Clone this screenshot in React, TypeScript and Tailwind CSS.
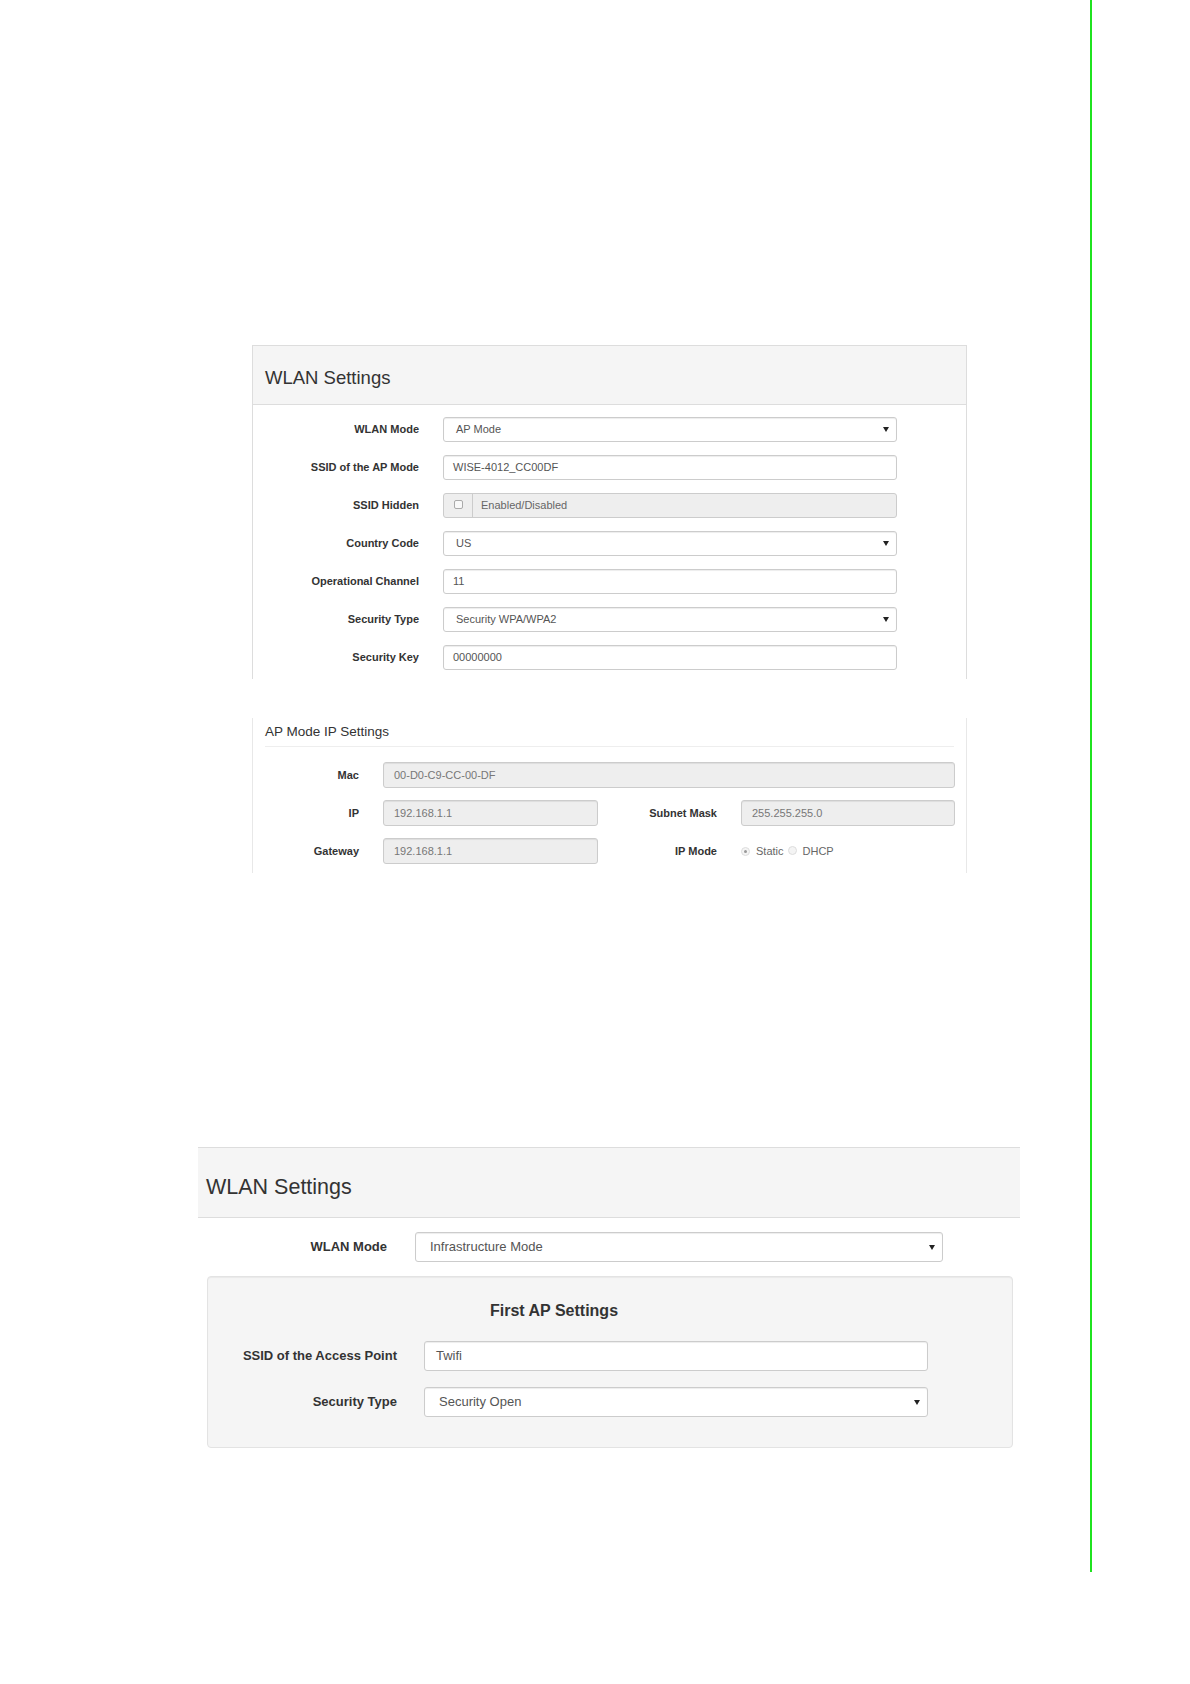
import React from "react";

const font = { fontFamily: '"Liberation Sans", Arial, sans-serif' };

function Arrow() {
  return (
    <svg width="6" height="5" viewBox="0 0 6 5" className="shrink-0">
      <path d="M0 0 L6 0 L3 5 Z" fill="#222" />
    </svg>
  );
}

function Field({
  value,
  select,
  disabled,
  className,
  text = "text-[11px]",
  pad = "pl-[10px]",
}: {
  value: string;
  select?: boolean;
  disabled?: boolean;
  className: string;
  text?: string;
  pad?: string;
}) {
  return (
    <div
      className={`flex items-center justify-between border border-[#ccc] rounded-[3px] pr-[7px] shadow-[inset_0_1px_1px_rgba(0,0,0,0.075)] ${pad} ${text} ${
        disabled ? "bg-[#eee] text-[#777]" : "bg-white text-[#555]"
      } ${className}`}
    >
      <span className="whitespace-nowrap">{value}</span>
      {select && <Arrow />}
    </div>
  );
}

function Radio({ checked }: { checked?: boolean }) {
  return (
    <span className="inline-flex items-center justify-center w-[9px] h-[9px] rounded-full border border-[#ddd] bg-[#f4f4f4]">
      {checked && <span className="w-[3px] h-[3px] rounded-full bg-[#999]" />}
    </span>
  );
}

export default function App() {
  const apRows = [
    { label: "WLAN Mode", value: "AP Mode", select: true },
    { label: "SSID of the AP Mode", value: "WISE-4012_CC00DF" },
    { label: "SSID Hidden", value: "Enabled/Disabled", hidden: true },
    { label: "Country Code", value: "US", select: true },
    { label: "Operational Channel", value: "11" },
    { label: "Security Type", value: "Security WPA/WPA2", select: true },
    { label: "Security Key", value: "00000000" },
  ];

  return (
    <div className="w-[1190px] h-[1684px] bg-white flex" style={font}>
      <div className="w-[1090px] flex flex-col">
        {/* WLAN Settings - AP mode */}
        <div className="mt-[345px] ml-[252px] w-[715px]">
          <div className="h-[60px] bg-[#f5f5f5] border border-[#ddd] flex items-center pl-[12px] pt-[6px]">
            <span className="text-[18.5px] text-[#333]">WLAN Settings</span>
          </div>
          <div className="h-[274px] border-x border-[#ddd] pt-[12px] flex flex-col gap-[13px]">
            {apRows.map((r) => (
              <div key={r.label} className="flex items-center h-[25px]">
                <div className="w-[166px] text-right text-[11px] font-bold text-[#333]">{r.label}</div>
                {r.hidden ? (
                  <div className="ml-[24px] w-[454px] h-[25px] flex border border-[#ccc] rounded-[3px] bg-[#eee] text-[11px] text-[#666]">
                    <div className="w-[29px] border-r border-[#ccc] flex items-center justify-center">
                      <span className="w-[9px] h-[9px] border border-[#aaa] rounded-[2px] bg-[#f8f8f8] -mt-[2px]" />
                    </div>
                    <div className="flex items-center pl-[8px]">{r.value}</div>
                  </div>
                ) : (
                  <Field
                    value={r.value}
                    select={r.select}
                    className="ml-[24px] w-[454px] h-[25px]"
                    pad={r.select ? "pl-[12px]" : "pl-[9px]"}
                  />
                )}
              </div>
            ))}
          </div>
        </div>

        {/* AP Mode IP Settings */}
        <div className="mt-[39px] ml-[252px] w-[715px] h-[155px] border-x border-[#e8e8e8]">
          <div className="mx-[12px] pt-[4px] pb-[4px] border-b border-[#eee] text-[13.5px] leading-[20px] text-[#333]">
            AP Mode IP Settings
          </div>
          <div className="mt-[15px] flex flex-col gap-[12px]">
            <div className="flex items-center h-[26px]">
              <div className="w-[106px] text-right text-[11px] font-bold text-[#333]">Mac</div>
              <Field value="00-D0-C9-CC-00-DF" disabled className="ml-[24px] w-[572px] h-[26px]" />
            </div>
            <div className="flex items-center h-[26px]">
              <div className="w-[106px] text-right text-[11px] font-bold text-[#333]">IP</div>
              <Field value="192.168.1.1" disabled className="ml-[24px] w-[215px] h-[26px]" />
              <div className="w-[119px] text-right text-[11px] font-bold text-[#333]">Subnet Mask</div>
              <Field value="255.255.255.0" disabled className="ml-[24px] w-[214px] h-[26px]" />
            </div>
            <div className="flex items-center h-[26px]">
              <div className="w-[106px] text-right text-[11px] font-bold text-[#333]">Gateway</div>
              <Field value="192.168.1.1" disabled className="ml-[24px] w-[215px] h-[26px]" />
              <div className="w-[119px] text-right text-[11px] font-bold text-[#333]">IP Mode</div>
              <div className="ml-[24px] flex items-center text-[11px] text-[#666]">
                <Radio checked />
                <span className="ml-[6px]">Static</span>
                <span className="ml-[4px]">
                  <Radio />
                </span>
                <span className="ml-[6px]">DHCP</span>
              </div>
            </div>
          </div>
        </div>

        {/* WLAN Settings - Infrastructure mode */}
        <div className="mt-[274px] ml-[198px] w-[822px]">
          <div className="h-[71px] bg-[#f5f5f5] border-y border-[#ddd] flex items-center pl-[8px] pt-[10px]">
            <span className="text-[21.5px] text-[#333]">WLAN Settings</span>
          </div>
          <div className="mt-[14px] flex items-center h-[30px]">
            <div className="w-[189px] text-right text-[13px] font-bold text-[#333]">WLAN Mode</div>
            <Field
              value="Infrastructure Mode"
              select
              text="text-[13px]"
              pad="pl-[14px]"
              className="ml-[28px] w-[528px] h-[30px]"
            />
          </div>
          <div className="mt-[14px] ml-[9px] w-[806px] h-[172px] bg-[#f5f5f5] border border-[#e3e3e3] rounded-[4px] shadow-[inset_0_1px_1px_rgba(0,0,0,0.05)]">
            <div className="pt-[23px] pl-[282px] text-[16px] leading-[22px] font-bold text-[#333]">First AP Settings</div>
            <div className="mt-[19px] flex flex-col gap-[16px]">
              <div className="flex items-center h-[30px]">
                <div className="w-[189px] text-right text-[13px] font-bold text-[#333]">SSID of the Access Point</div>
                <Field value="Twifi" text="text-[13px]" pad="pl-[11px]" className="ml-[27px] w-[504px] h-[30px]" />
              </div>
              <div className="flex items-center h-[30px]">
                <div className="w-[189px] text-right text-[13px] font-bold text-[#333]">Security Type</div>
                <Field
                  value="Security Open"
                  select
                  text="text-[13px]"
                  pad="pl-[14px]"
                  className="ml-[27px] w-[504px] h-[30px]"
                />
              </div>
            </div>
          </div>
        </div>
      </div>
      <div className="w-[2px] h-[1572px] bg-[#1fe31f]" />
    </div>
  );
}
